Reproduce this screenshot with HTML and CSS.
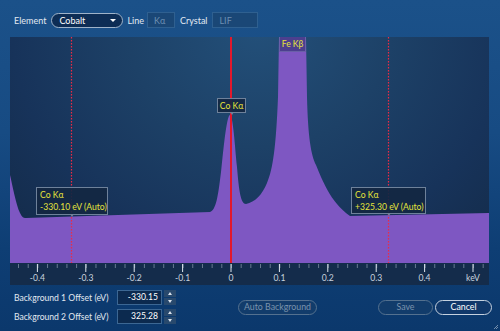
FILE: index.html
```html
<!DOCTYPE html>
<html>
<head>
<meta charset="utf-8">
<link rel="stylesheet" href="styles.css">
</head>
<body>
<div class="app">
  <div class="toolbar">
    <span class="lbl lbl-element">Element</span>
    <div class="select"><span class="select-text">Cobalt</span><span class="caret"></span></div>
    <span class="lbl lbl-line">Line</span>
    <div class="field field-line">Kα</div>
    <span class="lbl lbl-crystal">Crystal</span>
    <div class="field field-crystal">LIF</div>
  </div>

  <div class="chart">
    <div class="plot">
      <svg class="plot-svg" viewBox="0 0 479 226" width="479" height="226">
        <path class="spectrum" d="M0,138 C2,146 6,168 10,176 C12,180 13,181 16,181 L200,175 C206,173 208,160 211,135 C214,105 217,78 220,78 C223,78 225,110 227,130 C229,155 231,167 236,167 C245,165 252,158 257,146 C263,132 266,110 268,60 L269,0 L296,0 L297,60 C298,100 301,118 306,128 C312,142 320,165 340,179 L479,176 L479,226 L0,226 Z"/>
        <line class="marker-dot" x1="61.5" y1="0" x2="61.5" y2="226"/>
        <line class="marker-dot" x1="378.5" y1="0" x2="378.5" y2="226"/>
        <line class="marker-main" x1="221" y1="0" x2="221" y2="226"/>
      </svg>
      <div class="tag tag-fe">Fe Kβ</div>
      <div class="tip tip-peak">Co Kα</div>
      <div class="tip tip-left">Co Kα<br>-330.10 eV (Auto)</div>
      <div class="tip tip-right">Co Kα<br>+325.30 eV (Auto)</div>
    </div>
    <div class="axis">
      <svg class="axis-svg" viewBox="0 0 479 22" width="479" height="22">
        <defs>
          <pattern id="minor" patternUnits="userSpaceOnUse" x="8.04" y="0" width="9.68" height="22">
            <rect x="-0.5" y="1" width="1" height="4" class="tick-minor"/>
          </pattern>
        </defs>
        <rect x="4" y="0" width="472" height="6" fill="url(#minor)"/>
        <g class="tick-major">
          <rect x="26.9" y="1" width="1" height="8"/>
          <rect x="75.3" y="1" width="1" height="8"/>
          <rect x="123.7" y="1" width="1" height="8"/>
          <rect x="172.1" y="1" width="1" height="8"/>
          <rect x="220.5" y="1" width="1" height="8"/>
          <rect x="268.9" y="1" width="1" height="8"/>
          <rect x="317.3" y="1" width="1" height="8"/>
          <rect x="365.7" y="1" width="1" height="8"/>
          <rect x="414.1" y="1" width="1" height="8"/>
          <rect x="462.5" y="1" width="1" height="8"/>
        </g>
        <g class="axis-labels">
          <text x="27.4" y="18">-0.4</text>
          <text x="75.8" y="18">-0.3</text>
          <text x="124.2" y="18">-0.2</text>
          <text x="172.6" y="18">-0.1</text>
          <text x="221" y="18">0</text>
          <text x="269.4" y="18">0.1</text>
          <text x="317.8" y="18">0.2</text>
          <text x="366.2" y="18">0.3</text>
          <text x="414.6" y="18">0.4</text>
          <text x="463" y="18">keV</text>
        </g>
      </svg>
    </div>
  </div>

  <div class="footer">
    <div class="offsets">
      <div class="offset-row">
        <span class="offset-label">Background 1 Offset (eV)</span>
        <div class="num">-330.15</div>
        <div class="spin"><span class="spin-btn"><span class="arrow-up"></span></span><span class="spin-btn"><span class="arrow-down"></span></span></div>
      </div>
      <div class="offset-row">
        <span class="offset-label">Background 2 Offset (eV)</span>
        <div class="num">325.28</div>
        <div class="spin"><span class="spin-btn"><span class="arrow-up"></span></span><span class="spin-btn"><span class="arrow-down"></span></span></div>
      </div>
    </div>
    <button class="btn btn-disabled btn-auto">Auto Background</button>
    <div class="actions">
      <button class="btn btn-disabled btn-save">Save</button>
      <button class="btn btn-cancel">Cancel</button>
    </div>
  </div>
  <svg class="grip" viewBox="0 0 6 6" width="6" height="6">
    <path d="M5,1 L1,5 M5,3 L3,5" />
  </svg>
</div>
</body>
</html>
```

FILE: styles.css
```css
* { box-sizing: border-box; }
html, body {
  margin: 0;
  padding: 0;
}
body {
  width: 500px;
  height: 331px;
  overflow: hidden;
  font-family: "Lato", "Open Sans", sans-serif;
  color: #e2e9f1;
}
.app {
  position: relative;
  width: 500px;
  height: 331px;
  padding: 12px 11px 0 10px;
  background: linear-gradient(180deg, #1b5189 0%, #174b83 40%, #0e3e74 75%, #0b386c 100%);
  display: flex;
  flex-direction: column;
}

/* toolbar */
.toolbar {
  height: 16px;
  display: flex;
  align-items: center;
  padding-left: 4px;
  font-size: 9px;
}
.lbl { color: #e2e9f1; white-space: nowrap; }
.lbl-element { margin-right: 5px; }
.lbl-line { margin: 0 3px 0 4px; }
.lbl-crystal { margin: 0 5px 0 5px; }
.select {
  width: 72px;
  height: 15px;
  border: 1px solid #9fb3c9;
  border-radius: 8px;
  background: #0d2d55;
  display: flex;
  align-items: center;
  justify-content: space-between;
  padding: 0 6px 0 7px;
  color: #ffffff;
}
.caret {
  width: 0;
  height: 0;
  border-left: 3px solid transparent;
  border-right: 3px solid transparent;
  border-top: 3px solid #ffffff;
}
.field {
  height: 16px;
  border: 1px solid #2f6090;
  background: #1a4776;
  color: #6d8fb3;
  display: flex;
  align-items: center;
  padding-left: 6px;
}
.field-line { width: 28px; }
.field-crystal { width: 46px; }

/* chart */
.chart {
  margin-top: 9px;
  width: 479px;
  background: #142c4b;
}
.plot {
  position: relative;
  height: 226px;
  background: radial-gradient(ellipse 330px 300px at 250px -10px, #23507a 0%, #1d4167 40%, #17335a 75%, #142c4b 100%);
}
.plot-svg { display: block; }
.spectrum { fill: #7e57c2; }
.marker-main { stroke: #e3182c; stroke-width: 2; }
.marker-dot { stroke: #ee2a44; stroke-width: 1.2; stroke-dasharray: 1.5 1.5; }

.tag, .tip {
  position: absolute;
  font-size: 8.6px;
  line-height: 12px;
  color: #e6e43c;
  white-space: nowrap;
}
.tag-fe {
  left: 269px;
  top: 0;
  width: 27px;
  height: 15px;
  background: #4c3f8e;
  border: 1px solid #6a5fa8;
  border-top: none;
  text-align: center;
  padding-top: 1px;
}
.tip {
  background: rgba(19, 39, 66, 0.92);
  border: 1px solid #6e819a;
  padding: 1px 3px;
}
.tip::after {
  content: "";
  position: absolute;
  bottom: -3px;
  width: 0;
  height: 0;
  border-left: 2px solid transparent;
  border-right: 2px solid transparent;
  border-top: 3px solid #6e819a;
}
.tip-peak {
  left: 207px;
  top: 61px;
  width: 29px;
  height: 15px;
  text-align: center;
  padding: 1px 0;
}
.tip-peak::after { left: 12px; }
.tip-left {
  left: 26px;
  top: 150px;
  width: 72px;
  height: 28px;
}
.tip-left::after { left: 33px; }
.tip-right {
  left: 341px;
  top: 150px;
  width: 75px;
  height: 27px;
}
.tip-right::after { left: 35px; }

.axis {
  height: 22px;
  background: #142c4b;
}
.axis-svg { display: block; }
.tick-minor { fill: #b9c4d2; }
.tick-major rect { fill: #dfe6ee; }
.axis-labels text {
  font-family: "Lato", "Open Sans", sans-serif;
  font-size: 8.6px;
  fill: #c9d3df;
  text-anchor: middle;
}

/* footer */
.footer {
  margin-top: 5px;
  margin-right: -3px;
  padding-left: 4px;
  display: flex;
  align-items: center;
}
.offsets {
  display: flex;
  flex-direction: column;
  gap: 4px;
}
.offset-row {
  display: flex;
  align-items: center;
  height: 15px;
  font-size: 8.6px;
}
.offset-label {
  width: 103px;
  white-space: nowrap;
  color: #e2e9f1;
}
.num {
  width: 45px;
  height: 15px;
  border: 1px solid #3c6793;
  background: #0c2a4f;
  color: #ffffff;
  text-align: right;
  padding-right: 3px;
  line-height: 13px;
}
.spin {
  margin-left: 2px;
  width: 12px;
  height: 15px;
  display: flex;
  flex-direction: column;
  gap: 1px;
}
.spin-btn {
  flex: 1;
  background: #28496d;
  display: flex;
  align-items: center;
  justify-content: center;
}
.arrow-up {
  width: 0; height: 0;
  border-left: 2px solid transparent;
  border-right: 2px solid transparent;
  border-bottom: 3px solid #d8e0ea;
}
.arrow-down {
  width: 0; height: 0;
  border-left: 2px solid transparent;
  border-right: 2px solid transparent;
  border-top: 3px solid #d8e0ea;
}
.btn {
  height: 15px;
  border-radius: 8px;
  font-family: "Lato", "Open Sans", sans-serif;
  font-size: 8.8px;
  line-height: 12px;
  padding: 0;
  text-align: center;
}
.btn-disabled {
  background: #123c6b;
  border: 1px solid #54718f;
  color: #7a93ad;
}
.btn-auto {
  width: 79px;
  margin-left: 62px;
}
.actions {
  margin-left: auto;
  display: flex;
  gap: 2px;
}
.btn-save { width: 55px; }
.btn-cancel {
  width: 57px;
  background: #10386a;
  border: 1px solid #c5d1df;
  color: #ffffff;
}
.grip {
  position: absolute;
  right: 1px;
  bottom: 1px;
}
.grip path {
  stroke: #8ea4bd;
  stroke-width: 0.8;
  fill: none;
}
```
